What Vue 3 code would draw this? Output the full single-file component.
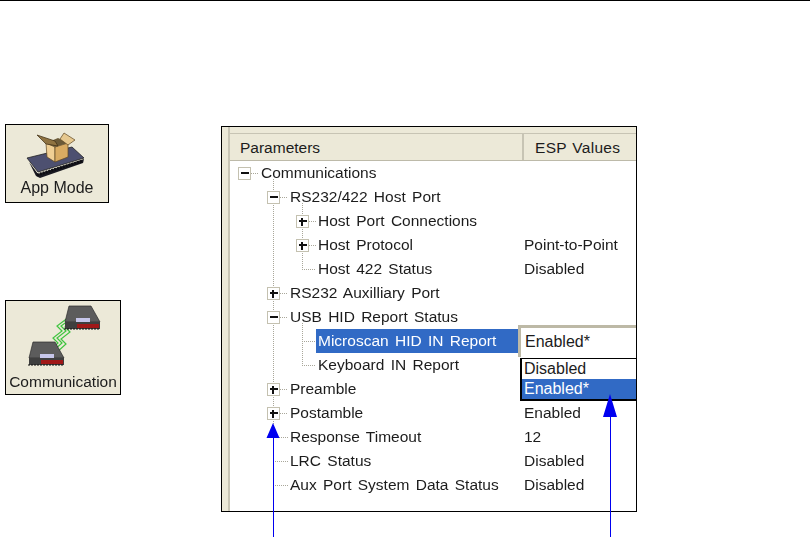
<script setup>
const rows = [
  { name: 'Communications', depth: 0, box: '-' },
  { name: 'RS232/422 Host Port', depth: 1, box: '-' },
  { name: 'Host Port Connections', depth: 2, box: '+' },
  { name: 'Host Protocol', depth: 2, box: '+', value: 'Point-to-Point' },
  { name: 'Host 422 Status', depth: 2, value: 'Disabled' },
  { name: 'RS232 Auxilliary Port', depth: 1, box: '+' },
  { name: 'USB HID Report Status', depth: 1, box: '-' },
  { name: 'Microscan HID IN Report', depth: 2, selected: true },
  { name: 'Keyboard IN Report', depth: 2 },
  { name: 'Preamble', depth: 1, box: '+' },
  { name: 'Postamble', depth: 1, box: '+', value: 'Enabled' },
  { name: 'Response Timeout', depth: 1, value: '12' },
  { name: 'LRC Status', depth: 1, value: 'Disabled' },
  { name: 'Aux Port System Data Status', depth: 1, value: 'Disabled' }
]
const lines = [
  'M15 12.500H29', 'M44 36.500H58', 'M73 60.500H86', 'M73 84.500H86', 'M72 108.500H86', 'M44 132.500H58', 'M44 156.500H58',
  'M72 180.500H86', 'M72 204.500H86', 'M44 228.500H58', 'M44 252.500H58', 'M43 276.500H58', 'M43 300.500H58', 'M43 324.500H58',
  'M43.500 18V324', 'M72.500 42V108', 'M72.500 162V204'
]
</script>

<template>
  <div class="page">
    <div class="rule"></div>
    <main class="main">
      <aside class="tools">
        <div class="tool tool-app">
          <svg class="tool-icon" width="102" height="54" viewBox="6 125 102 54" aria-hidden="true">
            <path d="M27 158 72 147 84 158 38 172Z" fill="#4d5070" stroke="#222" stroke-width=".8"/>
            <path d="M29 162 38 174 84 159 83 163 40 178 36 176Z" fill="#1a1a22"/>
            <path d="M37 175 83 161" stroke="#0d0d12" stroke-width="3" stroke-dasharray="2 1" fill="none"/>
            <path d="M46 143 55 147 55 162 47 157Z" fill="#f0cf94" stroke="#5d4520" stroke-width=".7"/>
            <path d="M55 147 68 143 68 157 55 162Z" fill="#d9ab62" stroke="#5d4520" stroke-width=".7"/>
            <path d="M46 143 58 138 68 143 55 147Z" fill="#6b5a38"/>
            <path d="M37 135 55 141 58 146 46 144Z" fill="#8f7341" stroke="#3d2d12" stroke-width=".7"/>
            <path d="M64 133 75 140 68 145 60 139Z" fill="#e6c88f" stroke="#5d4520" stroke-width=".7"/>
          </svg>
          <span>App Mode</span>
        </div>
        <div class="tool tool-comm">
          <svg class="tool-icon" width="114" height="72" viewBox="6 301 114 72" aria-hidden="true">
            <g fill="none" stroke="#3fc43f" stroke-width="1.200">
              <path d="M48 352 58 343 53 338 62 331 57 326 69 317"/>
              <path d="M52 352 62 343 57 338 66 331 61 326 72 318"/>
              <path d="M56 353 66 344 61 339 70 332 65 327 75 319"/>
            </g>
            <g>
              <path d="M33 342 55 342 64 358 29 358Z" fill="#5c5c5c" stroke="#2b2b2b" stroke-width=".7"/>
              <path d="M29 358H64V365H29Z" fill="#3f3f3f"/>
              <path d="M40 354H54V358H40Z" fill="#c6c6ea"/>
              <path d="M41 360H63V364H41Z" fill="#a01818"/>
              <path d="M28 365H64" stroke="#111" stroke-width="1" stroke-dasharray="2 1"/>
            </g>
            <g transform="translate(36 -36)">
              <path d="M33 342 55 342 64 358 29 358Z" fill="#5c5c5c" stroke="#2b2b2b" stroke-width=".7"/>
              <path d="M29 358H64V365H29Z" fill="#3f3f3f"/>
              <path d="M40 354H54V358H40Z" fill="#c6c6ea"/>
              <path d="M41 360H63V364H41Z" fill="#a01818"/>
              <path d="M28 365H64" stroke="#111" stroke-width="1" stroke-dasharray="2 1"/>
            </g>
          </svg>
          <span>Communication</span>
        </div>
      </aside>

      <section class="panel">
        <div class="gutter"></div>
        <div class="content">
          <div class="strip"></div>
          <div class="header">
            <div class="head-cell head-params">Parameters</div>
            <div class="head-cell head-values">ESP Values</div>
          </div>
          <div class="tree">
            <svg class="connectors" width="290" height="340" aria-hidden="true">
              <path v-for="d in lines" :key="d" :d="d" stroke="#a9a79a" stroke-width="1" stroke-dasharray="1 1" fill="none"/>
            </svg>
            <div v-for="row in rows" :key="row.name" class="row">
              <div class="name-cell" :class="'depth-' + row.depth">
                <span v-if="row.box" class="box" :class="'box-' + row.depth">
                  <i class="bar-h"></i><i v-if="row.box === '+'" class="bar-v"></i>
                </span>
                <span class="name" :class="{ selected: row.selected }">{{ row.name }}</span>
              </div>
              <div class="value-cell">{{ row.value }}</div>
            </div>
            <div class="editor">Enabled*</div>
            <div class="dropdown">
              <div class="option">Disabled</div>
              <div class="option option-active">Enabled*</div>
            </div>
          </div>
        </div>
      </section>
    </main>

    <svg class="arrows" width="810" height="539" aria-hidden="true">
      <path d="M273.500 436V537M610.500 415V537" stroke="#0000f0" stroke-width="1" fill="none"/>
      <path d="M273 423 279.500 438H266.500ZM610 394 617 417H603Z" fill="#0000f0"/>
    </svg>
  </div>
</template>

<style>
html, body { margin: 0; background: #fff; }
</style>

<style scoped>
.page {
  position: relative;
  width: 810px;
  height: 539px;
  overflow: hidden;
  background: #fff;
  font-family: "Liberation Sans", Arial, sans-serif;
  color: #1c1c1c;
}
.rule { height: 1px; background: #000; }
.main { display: flex; padding-top: 123px; }
.tools {
  width: 216px;
  margin-left: 5px;
  display: flex;
  flex-direction: column;
  align-items: flex-start;
}
.tool {
  box-sizing: border-box;
  border: 1px solid #000;
  background: #ece9d8;
  display: flex;
  flex-direction: column;
  align-items: center;
  font-size: 15.500px;
  line-height: 18px;
}
.tool span, .tool svg { filter: blur(.4px); }
.tool-app { width: 104px; height: 79px; font-size: 16px; }
.tool-comm { width: 116px; height: 95px; margin-top: 97px; }
.tool-icon { display: block; flex: none; }
.panel {
  box-sizing: border-box;
  width: 416px;
  height: 386px;
  margin-top: 2px;
  border: 1px solid #000;
  display: flex;
  background: #fff;
}
.gutter {
  width: 8px;
  flex: none;
  background: #ece9d8;
  border-right: 2px solid #c9c6b6;
  box-sizing: border-box;
}
.content { flex: 1; min-width: 0; }
.strip { height: 6px; background: #ece9d8; border-bottom: 1px solid #c7c4b4; }
.header {
  display: flex;
  height: 26px;
  background: #ece9d8;
  border-bottom: 1px solid #bdbaa9;
  font-size: 15.500px;
}
.head-cell { line-height: 27px; word-spacing: 1px; }
.head-params { box-sizing: border-box; width: 294px; padding-left: 10px; border-right: 2px solid #c7c4b4; }
.head-values { flex: 1; padding-left: 11px; letter-spacing: .3px; }
.tree {
  position: relative;
  font-size: 15.500px;
  word-spacing: 2px;
  filter: blur(.3px);
}
.connectors { position: absolute; left: 0; top: 0; }
.row { position: relative; display: flex; height: 24px; line-height: 24px; }
.name-cell { box-sizing: border-box; width: 294px; flex: none; display: flex; align-items: center; position: relative; }
.depth-0 { padding-left: 31px; }
.depth-1 { padding-left: 60px; }
.depth-2 { padding-left: 88px; }
.name { white-space: nowrap; }
.name.selected {
  flex: 1;
  margin-left: -2px;
  margin-right: 6px;
  padding-left: 2px;
  background: #316ac5;
  color: #fff;
  height: 24px;
}
.value-cell { white-space: nowrap; word-spacing: 0; }
.box {
  position: absolute;
  box-sizing: border-box;
  width: 13px;
  height: 13px;
  top: 6px;
  border: 1.500px solid #c4c1b0;
  background: #fff;
}
.box-0 { left: 8px; }
.box-1 { left: 37px; }
.box-2 { left: 66px; }
.bar-h { position: absolute; left: 1.500px; right: 1.500px; top: 4px; height: 1.500px; background: #111; }
.bar-v { position: absolute; top: 1.500px; bottom: 1.500px; left: 4px; width: 1.500px; background: #111; }
.editor {
  position: absolute;
  box-sizing: border-box;
  left: 288px;
  top: 164px;
  width: 118px;
  height: 32px;
  border-top: 3px solid #bdb9a6;
  border-left: 3px solid #bdb9a6;
  background: #fff;
  padding-left: 4px;
  line-height: 28px;
  font-size: 16px;
  word-spacing: 0;
}
.dropdown {
  position: absolute;
  box-sizing: border-box;
  left: 290px;
  top: 197px;
  width: 116px;
  height: 43px;
  border: 1px solid #000;
  border-width: 1px 0 2px 2px;
  background: #fff;
  font-size: 16px;
  word-spacing: 0;
}
.option { height: 20px; line-height: 20px; padding-left: 2px; }
.option-active { background: #316ac5; color: #fff; }
.arrows { position: absolute; left: 0; top: 0; pointer-events: none; }
</style>
